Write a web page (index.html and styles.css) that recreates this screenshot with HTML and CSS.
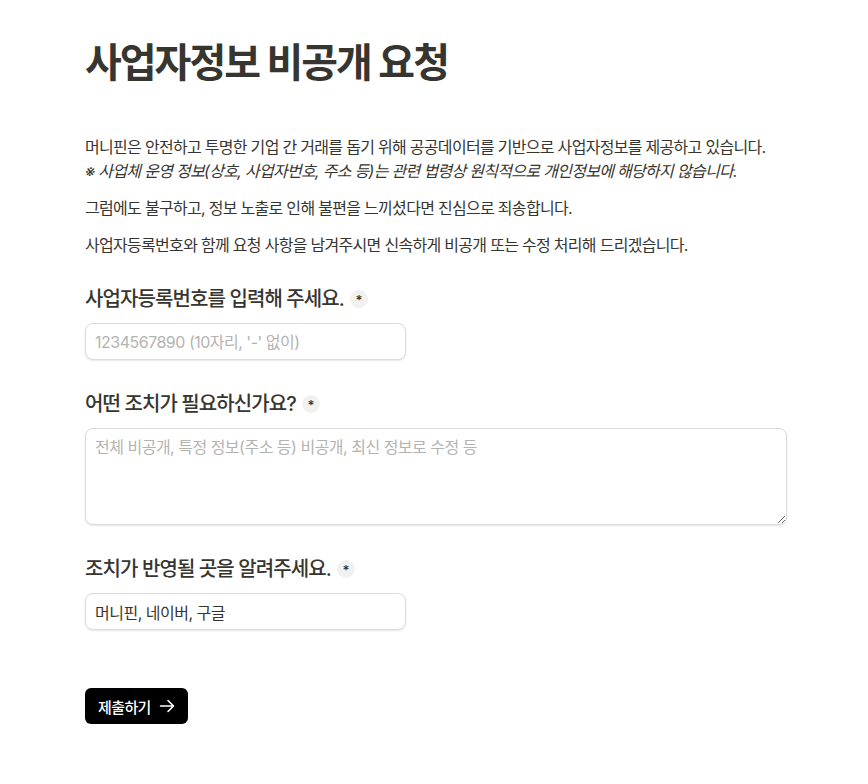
FILE: index.html
```html
<!DOCTYPE html>
<html lang="ko">

<head>
	<meta charset="UTF-8">
	<title>사업자정보 비공개 요청</title>
	<link rel="stylesheet" href="styles.css">
</head>

<body>
	<div class="form">
		<h1 class="title">사업자정보 비공개 요청</h1>

		<div class="desc">
			<p>머니핀은 안전하고 투명한 기업 간 거래를 돕기 위해 공공데이터를 기반으로 사업자정보를 제공하고 있습니다.<br>
				<em>※ 사업체 운영 정보(상호, 사업자번호, 주소 등)는 관련 법령상 원칙적으로 개인정보에 해당하지 않습니다.</em></p>
			<p>그럼에도 불구하고, 정보 노출로 인해 불편을 느끼셨다면 진심으로 죄송합니다.</p>
			<p>사업자등록번호와 함께 요청 사항을 남겨주시면 신속하게 비공개 또는 수정 처리해 드리겠습니다.</p>
		</div>

		<div class="field">
			<label class="label">사업자등록번호를 입력해 주세요. <span class="req">*</span></label>
			<input class="input" type="text" placeholder="1234567890 (10자리, '-' 없이)">
		</div>

		<div class="field">
			<label class="label">어떤 조치가 필요하신가요? <span class="req">*</span></label>
			<textarea class="textarea" placeholder="전체 비공개, 특정 정보(주소 등) 비공개, 최신 정보로 수정 등"></textarea>
		</div>

		<div class="field">
			<label class="label">조치가 반영될 곳을 알려주세요. <span class="req">*</span></label>
			<input class="input" type="text" value="머니핀, 네이버, 구글">
		</div>

		<button class="submit">제출하기
			<svg width="16" height="16" viewBox="0 0 16 16" fill="none" stroke="#fff" stroke-width="1.6" stroke-linecap="round" stroke-linejoin="round">
				<path d="M1.5 8h13M9 2.5 14.5 8 9 13.5" />
			</svg>
		</button>
	</div>
</body>

</html>
```

FILE: styles.css
```css
body,
h1,
p {
	margin: 0;
	padding: 0;
}

body {
	background: #fff;
	color: #37352f;
	font-family: "Inter", "Noto Sans CJK KR", sans-serif;
}

.form {
	width: 702px;
	padding: 37px 0 60px 85px;
}

.title {
	font-size: 40px;
	line-height: 52px;
	font-weight: 700;
	letter-spacing: -2px;
	margin-bottom: 46px;
}

.desc p {
	font-size: 16px;
	line-height: 24px;
	letter-spacing: -0.7px;
	margin-bottom: 13px;
}

.desc em {
	font-style: italic;
}

.field {
	margin-top: 28px;
}

.field + .field {
	margin-top: 30px;
}

.label {
	display: flex;
	align-items: center;
	gap: 6px;
	font-size: 20px;
	line-height: 28px;
	font-weight: 500;
	letter-spacing: -0.9px;
	margin-bottom: 10px;
}

.req {
	display: inline-flex;
	align-items: center;
	justify-content: center;
	width: 18px;
	height: 18px;
	border-radius: 50%;
	background: #f1f1ef;
	font-size: 13px;
	font-weight: 600;
	letter-spacing: 0;
	line-height: 1;
	padding-top: 3px;
	box-sizing: border-box;
}

.input,
.textarea {
	display: block;
	box-sizing: border-box;
	border: 1px solid #dcdbd8;
	border-radius: 8px;
	box-shadow: 0 1px 2px rgba(15, 15, 15, 0.1);
	font: 16px/22px "Inter", "Noto Sans CJK KR", sans-serif;
	letter-spacing: -0.5px;
	color: #37352f;
	padding: 7px 9px;
	outline: none;
}

.input {
	width: 321px;
	height: 37px;
}

.textarea {
	width: 702px;
	height: 97px;
	resize: vertical;
}

.input::placeholder,
.textarea::placeholder {
	color: #b4b3b0;
}

.submit {
	display: flex;
	align-items: center;
	gap: 8px;
	margin-top: 58px;
	height: 36px;
	padding: 0 13px;
	border: none;
	border-radius: 6px;
	background: #000;
	color: #fff;
	font: 500 15px "Inter", "Noto Sans CJK KR", sans-serif;
	letter-spacing: -0.6px;
	cursor: pointer;
}
```
